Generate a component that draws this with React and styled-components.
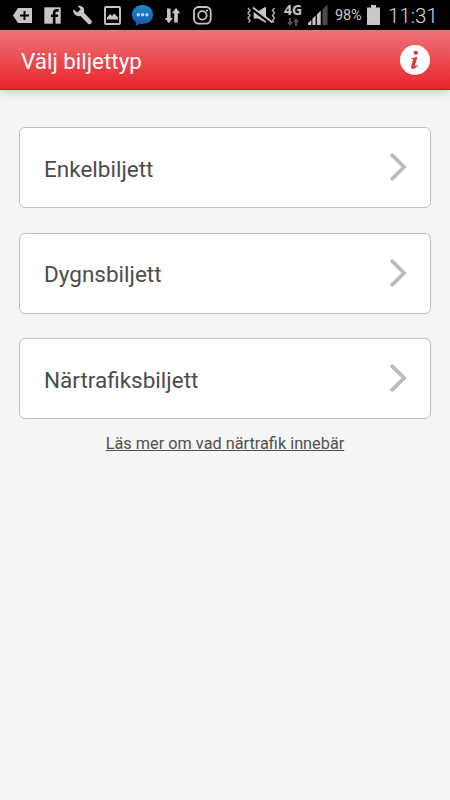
import React from 'react'
import styled, { createGlobalStyle } from 'styled-components'

const tickets = ['Enkelbiljett', 'Dygnsbiljett', 'Närtrafiksbiljett']

function StatusBar() {
  return (
    <Status>
      <Icons>
        <svg width="30" height="30" viewBox="0 0 30 30">
          <path d="M5 15.5L10 8H24V23H10Z" fill="#c6c6c6" />
          <path d="M16.5 11V20M12 15.5H21" stroke="#000" strokeWidth="2" />
        </svg>
        <svg width="30" height="30" viewBox="0 0 30 30">
          <path d="M6.3 7.3H22.7V23.7H6.3Z" fill="#c6c6c6" />
          <path d="M16.2 24V12.8Q16.2 10.4 18.7 10.4H20.6M13 15.7H20" fill="none" stroke="#000" strokeWidth="2.6" />
        </svg>
        <svg width="30" height="30" viewBox="0 0 30 30">
          <path d="M9.5 5.8Q14.5 5.1 16 9Q16.6 11 15.8 12.6L23.4 20.5Q24.4 22 23.2 23.5Q21.5 25 20 23.8L12.5 15.9Q9.5 17 6.7 14.4Q4.5 12 5.2 9.2L9.2 12.6L12.8 9.2Z" fill="#c6c6c6" />
        </svg>
        <svg width="30" height="30" viewBox="0 0 30 30">
          <rect x="7" y="7" width="15" height="17" rx="1" fill="none" stroke="#c6c6c6" strokeWidth="1.9" />
          <path d="M9 19.5V17.5L12.2 14L14 16L16.2 13.5L20 17.5V19.5Z" fill="#c6c6c6" />
        </svg>
        <svg width="30" height="30" viewBox="0 0 30 30">
          <defs>
            <linearGradient id="chat" x1="0" y1="0" x2="0" y2="1">
              <stop offset="0" stopColor="#1d88c4" />
              <stop offset="1" stopColor="#1558b0" />
            </linearGradient>
          </defs>
          <path d="M14.5 5C20.6 5 25 9 25 14.5S20.6 24 14.5 24Q13 24 11.6 23.7L8 26V22.3Q4 19.5 4 14.5C4 9 8.4 5 14.5 5Z" fill="url(#chat)" />
          <circle cx="10.3" cy="14.8" r="1.7" fill="#c4d2dc" />
          <circle cx="14.6" cy="14.8" r="1.7" fill="#c4d2dc" />
          <circle cx="18.9" cy="14.8" r="1.7" fill="#c4d2dc" />
        </svg>
        <svg width="30" height="30" viewBox="0 0 30 30">
          <path d="M9 8.5H12.6V18H14.8L10.8 23.2L6.8 18H9Z" fill="#c6c6c6" />
          <path d="M16.2 22.5H19.8V13.3H22.4L18 8L13.8 13.3H16.2Z" fill="#c6c6c6" />
        </svg>
        <svg width="30" height="30" viewBox="0 0 30 30">
          <rect x="6" y="7" width="16.7" height="16.7" rx="4.6" fill="none" stroke="#c6c6c6" strokeWidth="1.8" />
          <circle cx="14.4" cy="15.4" r="4.2" fill="none" stroke="#c6c6c6" strokeWidth="1.8" />
          <circle cx="19" cy="10.6" r="1.1" fill="#c6c6c6" />
        </svg>
      </Icons>
      <Signals>
        <svg width="30" height="30" viewBox="0 0 30 30">
          <path d="M6.7 11.5H11L17.5 7.2H19V23L11 18.5H6.7Z" fill="#c6c6c6" />
          <path d="M5.5 9.5L24 23.5" stroke="#000" strokeWidth="2.6" />
          <path d="M6 7.5L25.5 22.5" stroke="#c6c6c6" strokeWidth="1.8" />
          <path d="M1 8L3 10.5L1 13L3 15.5L1 18L3 20.5L1.5 22.5M27.5 8L25.5 10.5L27.5 13L25.5 15.5L27.5 18L25.5 20.5L27 22.5" fill="none" stroke="#b0b0b0" strokeWidth="1.4" />
        </svg>
        <Network>
          <span>4G</span>
          <svg width="12" height="8" viewBox="0 0 12 8">
            <path d="M2 0H4V4H6L3 8L0 4H2ZM8 8H10V4H12L9 0L6 4H8Z" fill="#555" />
          </svg>
        </Network>
        <svg width="24" height="30" viewBox="0 0 24 30">
          <path d="M2 25V23L5.3 20V25ZM6.4 25V18.8L9.6 15.5V25ZM10.9 25V14.5L14.7 10.5V25Z" fill="#c6c6c6" />
          <path d="M16.5 25V9.5L21.5 4.5V25Z" fill="#4c4c4c" />
        </svg>
        <Battery>98%</Battery>
        <svg width="13" height="30" viewBox="0 0 13 30">
          <path d="M0 7.5H4V5H9V7.5H13V25H0Z" fill="#c9c9c9" />
        </svg>
        <Clock>11:31</Clock>
      </Signals>
    </Status>
  )
}

function App() {
  return (
    <Page>
      <GlobalStyle />
      <StatusBar />
      <Header>
        <h1>Välj biljettyp</h1>
        <InfoButton aria-label="Information">
          <svg width="30" height="30" viewBox="0 0 30 30">
            <circle cx="15" cy="15" r="15" fill="#fff" />
            <ellipse cx="15.8" cy="7.7" rx="2.3" ry="2" fill="#df3a41" />
            <path d="M11.2 12.9Q14.5 12.8 17.4 11.7L15 20.5Q14.8 21.9 17.4 19.7L18 20.5Q15.4 24 12.7 23.9Q10.6 23.6 11.3 21L13.2 14.3Q13.2 13.6 11 13.8Z" fill="#df3a41" />
          </svg>
        </InfoButton>
      </Header>
      <List>
        {tickets.map((name) => (
          <Ticket key={name}>
            {name}
            <svg width="18" height="28" viewBox="0 0 18 28">
              <path d="M2.3 2.3L14.2 14L2.3 25.7" fill="none" stroke="#bbb" strokeWidth="3.8" strokeLinecap="round" strokeLinejoin="round" />
            </svg>
          </Ticket>
        ))}
      </List>
      <MoreLink href="#">Läs mer om vad närtrafik innebär</MoreLink>
    </Page>
  )
}

const GlobalStyle = createGlobalStyle`
  * {
    box-sizing: border-box;
  }
  body {
    margin: 0;
    background: #f5f5f5;
    font-family: Roboto, "Liberation Sans", sans-serif;
  }
`

const Page = styled.div`
  display: flex;
  flex-direction: column;
  height: 800px;
  overflow: hidden;
  background: #f5f5f5;
`

const Status = styled.div`
  display: flex;
  justify-content: space-between;
  height: 30px;
  padding: 0 13px 0 8px;
  background: #000;
  color: #c6c6c6;
`

const Icons = styled.div`
  display: flex;
`

const Signals = styled.div`
  display: flex;
  align-items: center;
`

const Network = styled.div`
  display: flex;
  flex-direction: column;
  align-items: center;
  width: 18px;
  height: 30px;
  margin: 0 4px 0 7px;
  padding-top: 3px;
  font: bold 14px/13px "Open Sans", sans-serif;
  svg {
    margin-top: 2px;
  }
`

const Battery = styled.span`
  width: 30px;
  margin: 2px 2px 0 5px;
  font-size: 14.5px;
  line-height: 18px;
  letter-spacing: -0.2px;
`

const Clock = styled.span`
  width: 49px;
  margin: 2px 0 0 8px;
  font-size: 20.5px;
  font-weight: 300;
  line-height: 24px;
  color: #d6d6d6;
`

const Header = styled.header`
  display: flex;
  align-items: center;
  justify-content: space-between;
  flex-shrink: 0;
  height: 60px;
  padding: 0 20px 0 21px;
  background: linear-gradient(#ee7377, #e8242b);
  border-bottom: 1px solid #e0060d;
  box-shadow: 0 1px 10px rgba(0, 0, 0, 0.22);
  h1 {
    margin: 3px 0 0;
    color: #fff;
    font-size: 22.4px;
    font-weight: 400;
  }
`

const InfoButton = styled.button`
  display: flex;
  padding: 0;
  border: none;
  background: none;
`

const List = styled.div`
  display: flex;
  flex-direction: column;
  gap: 24.5px;
  padding: 37.3px 19px 0;
`

const Ticket = styled.button`
  display: flex;
  align-items: center;
  justify-content: space-between;
  height: 81px;
  padding: 2px 22px 0 24px;
  border: 1px solid #bfbfbf;
  border-radius: 6px;
  background: #fff;
  color: #4c4c4c;
  font-family: inherit;
  font-size: 22.5px;
  font-weight: 400;
  svg {
    margin-bottom: 3px;
  }
`

const MoreLink = styled.a`
  align-self: center;
  margin-top: 14.5px;
  color: #505050;
  font-size: 16.3px;
  font-weight: 400;
  line-height: 19px;
`

export default App
